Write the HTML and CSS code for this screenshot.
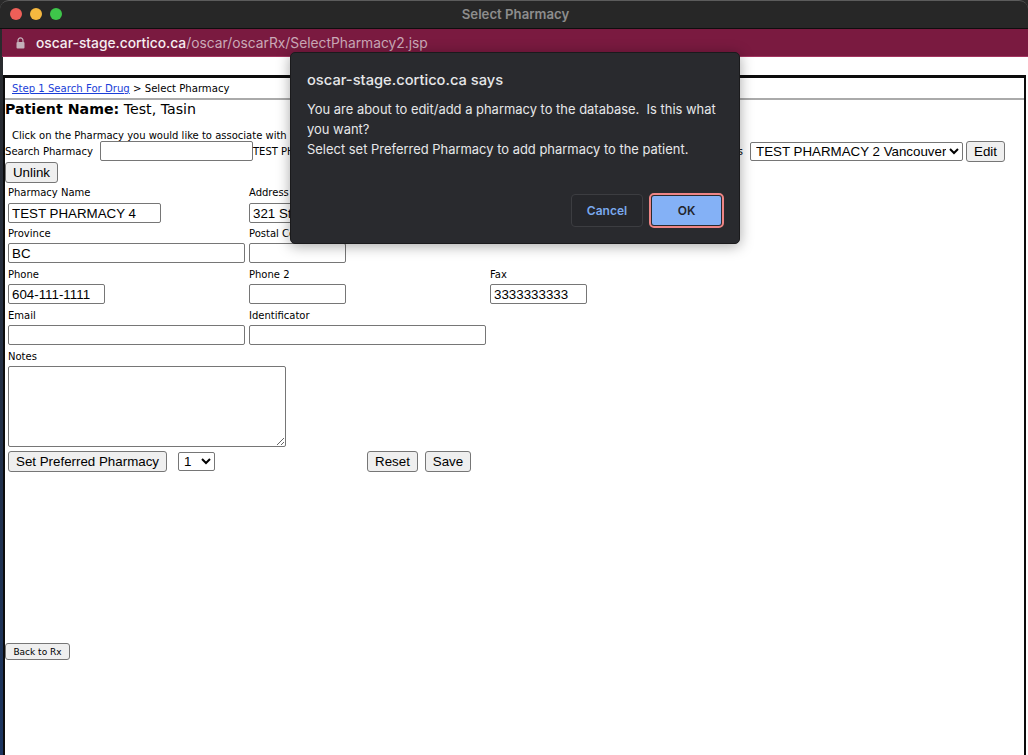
FILE: index.html
```html
<!DOCTYPE html>
<html lang="en">
<head>
<meta charset="utf-8">
<title>Select Pharmacy</title>
<link rel="stylesheet" href="styles.css">
</head>
<body>
<div class="window">
  <header class="titlebar">
    <div class="lights"><span class="light red"></span><span class="light yellow"></span><span class="light green"></span></div>
    <div class="title">Select Pharmacy</div>
  </header>
  <div class="urlbar">
    <svg class="lock" width="9" height="12" viewBox="0 0 9 12"><path d="M2 5V3.4a2.5 2.5 0 0 1 5 0V5" fill="none" stroke="#c4b0b9" stroke-width="1.2"/><rect x="0.5" y="5" width="8" height="6.5" rx="1" fill="#c4b0b9"/></svg>
    <span class="host">oscar-stage.cortico.ca</span><span class="path">/oscar/oscarRx/SelectPharmacy2.jsp</span>
  </div>
  <main class="page">
    <div class="frame">
      <div class="crumbs"><a href="#">Step 1 Search For Drug</a> &gt; Select Pharmacy</div>
      <div class="patient"><b>Patient Name:</b> Test, Tasin</div>
      <div class="hint">Click on the Pharmacy you would like to associate with this patient</div>
      <div class="search-row">
        <label class="small search-label">Search Pharmacy</label>
        <input class="field search-input" type="text">
        <span class="small search-result">TEST PHARMACY 4</span>
        <span class="small pref-label">Preferred Pharmacies</span>
        <select class="field pref-select"><option>TEST PHARMACY 2 Vancouver</option></select>
        <button class="btn edit">Edit</button>
      </div>
      <button class="btn unlink">Unlink</button>
      <form class="form">
        <div class="form-row first-row">
          <div class="cell c1"><label class="small">Pharmacy Name</label><input class="field w-name" type="text" value="TEST PHARMACY 4"></div>
          <div class="cell c2"><label class="small">Address</label><input class="field w-long" type="text" value="321 Street"></div>
        </div>
        <div class="form-row">
          <div class="cell c1"><label class="small">Province</label><input class="field w-long" type="text" value="BC"></div>
          <div class="cell c2"><label class="small">Postal Code</label><input class="field w-short" type="text"></div>
        </div>
        <div class="form-row">
          <div class="cell c1"><label class="small">Phone</label><input class="field w-short" type="text" value="604-111-1111"></div>
          <div class="cell c2"><label class="small">Phone 2</label><input class="field w-short" type="text"></div>
          <div class="cell c3"><label class="small">Fax</label><input class="field w-short" type="text" value="3333333333"></div>
        </div>
        <div class="form-row">
          <div class="cell c1"><label class="small">Email</label><input class="field w-long" type="text"></div>
          <div class="cell c2"><label class="small">Identificator</label><input class="field w-long" type="text"></div>
        </div>
        <div class="cell notes"><label class="small">Notes</label><textarea class="field notes-area"></textarea></div>
        <div class="actions">
          <button type="button" class="btn set-pref">Set Preferred Pharmacy</button>
          <select class="field order"><option>1</option></select>
          <button type="button" class="btn reset">Reset</button>
          <button type="button" class="btn save">Save</button>
        </div>
      </form>
      <button class="btn back">Back to Rx</button>
    </div>
  </main>
  <div class="dialog">
    <div class="dialog-title">oscar-stage.cortico.ca says</div>
    <p class="dialog-text">You are about to edit/add a pharmacy to the database.&nbsp; Is this what you want?<br>Select set Preferred Pharmacy to add pharmacy to the patient.</p>
    <div class="dialog-actions">
      <button class="dlg-btn cancel">Cancel</button>
      <button class="dlg-btn ok">OK</button>
    </div>
  </div>
</div>
</body>
</html>
```
FILE: styles.css
```css
* { box-sizing: border-box; }
html, body { margin: 0; height: 100%; overflow: hidden; }
body { background: #1d3a66; font-family: Inter, "Liberation Sans", Arial, sans-serif; }
.window { position: relative; width: 1028px; height: 755px; padding-left: 3px; display: flex; flex-direction: column; background: linear-gradient(#2a2a2a, #1c3560); }
.titlebar { margin-left: -3px; height: 29px; background: #272727; border-top: 1px solid #5c5c5c; border-bottom: 1px solid #0e0e0e; border-radius: 9px 9px 0 0; display: flex; align-items: center; position: relative; }
.lights { display: flex; gap: 8px; padding-left: 10px; margin-top: -1px; }
.light { width: 12px; height: 12px; border-radius: 50%; }
.red { background: #ee5f58; }
.yellow { background: #f5b83f; }
.green { background: #3ec64a; }
.title { position: absolute; left: 0; right: 0; text-align: center; font-size: 13.2px; font-weight: 600; color: #8d8d8d; margin-top: -2px; padding-left: 3px; }
.urlbar { height: 28px; margin-left: -1px; padding-left: 14px; background: #7a1a40; border-bottom: 1px solid #a33560; display: flex; align-items: center; font-size: 13.8px; white-space: nowrap; }
.lock { margin-right: 11px; }
.host { color: #f6eef1; font-weight: 500; }
.path { color: #caa9b7; }
.page { flex: 1; background: #fff; padding-top: 18px; padding-right: 2px; min-height: 0; }
.frame { height: 100%; border: solid #0c0c0c; border-width: 3px 2px 0 2px; font-family: "DejaVu Sans", Verdana, sans-serif; color: #000; }
.crumbs { height: 22px; padding: 4px 0 0 7px; font-size: 10.15px; line-height: 13px; border-bottom: 2px solid #aaa; }
.crumbs a { color: #1a3ed8; }
.patient { font-size: 14.2px; line-height: 18px; }
.hint { font-size: 10px; line-height: 13px; margin: 11px 0 0 7px; }
.small { font-size: 10px; line-height: 13px; white-space: nowrap; }
.field { font-family: "Liberation Sans", Arial, sans-serif; font-size: 13.33px; color: #000; background: #fff; border: 1px solid #767676; border-radius: 2px; padding: 1px 3px; height: 20px; display: block; }
.btn { font-family: "Liberation Sans", Arial, sans-serif; font-size: 13.33px; color: #000; background: #efefef; border: 1px solid #767676; border-radius: 3px; padding: 0; height: 21px; }
.search-row { display: flex; align-items: center; height: 20px; margin-top: -1px; padding-right: 19px; }
.search-label { width: 95px; flex: none; font-size: 10.1px; }
.search-input { width: 153px; flex: none; }
.search-result { flex: none; }
.pref-label { margin-left: auto; margin-right: 7px; }
.pref-select { width: 213px; height: 19px; padding: 0 0 0 1px; flex: none; }
.edit { margin-left: 3px; width: 39px; flex: none; }
.unlink { display: block; margin-top: 1px; width: 53px; }
.form { padding: 0 0 0 3px; }
.form-row { display: flex; height: 41px; }
.cell { display: flex; flex-direction: column; }
.cell .small { height: 19px; line-height: 20px; }
.first-row .cell .small { height: 20px; }
.c1 { width: 241px; }
.c2 { width: 241px; }
.w-name { width: 153px; }
.w-long { width: 237px; }
.w-short { width: 97px; }
.notes-area { width: 278px; height: 81px; resize: both; }
.actions { display: flex; align-items: center; margin-top: 4px; height: 21px; }
.set-pref { width: 159px; }
.order { width: 37px; height: 19px; margin-left: 11px; padding: 0 0 0 1px; }
.reset { margin-left: 152px; width: 51px; }
.save { margin-left: 7px; width: 46px; }
.back { display: block; margin-top: 171px; width: 65px; height: 17px; font-family: "DejaVu Sans", Verdana, sans-serif; font-size: 9px; }
.dialog { position: absolute; left: 290px; top: 52px; width: 450px; height: 192px; background: #292a2e; border: 1px solid #1a1a1c; border-radius: 5px; box-shadow: 0 2px 14px rgba(0,0,0,.35); color: #e6e7e9; padding: 0 16px; font-family: Inter, "Liberation Sans", sans-serif; }
.dialog-title { font-size: 14.7px; font-weight: 500; line-height: 20px; margin-top: 17px; }
.dialog-text { margin: 9px 0 0; font-size: 12.95px; line-height: 20px; }
.dialog-actions { position: absolute; right: 16px; bottom: 16px; display: flex; gap: 7px; }
.dlg-btn { height: 33px; font-family: Inter, "Liberation Sans", sans-serif; font-size: 12px; font-weight: 600; border-radius: 4px; }
.cancel { width: 72px; background: #26272b; border: 1px solid #3c3d41; color: #7aa9ee; }
.ok { width: 73px; background: #84b1f6; border: 2px solid #292a2e; outline: 2px solid #ee8585; outline-offset: -1px; color: #23252b; }
```
